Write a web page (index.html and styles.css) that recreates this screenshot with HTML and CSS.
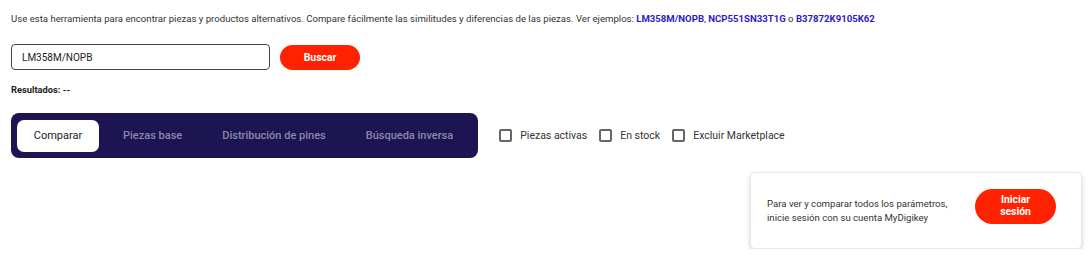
FILE: index.html
```html
<!DOCTYPE html>
<html lang="es">
<head>
<meta charset="utf-8">
<link rel="stylesheet" href="styles.css">
</head>
<body>
<div class="page">
  <p class="intro">Use esta herramienta para encontrar piezas y productos alternativos. Compare fácilmente las similitudes y diferencias de las piezas. Ver ejemplos: <a href="#">LM358M/NOPB</a>, <a href="#">NCP551SN33T1G</a> o <a href="#">B37872K9105K62</a></p>
  <div class="search">
    <input class="search-input" type="text" value="LM358M/NOPB">
    <button class="btn btn-search">Buscar</button>
  </div>
  <div class="results">Resultados: --</div>
  <div class="toolbar">
    <div class="tabs">
      <div class="tab active">Comparar</div>
      <div class="tab">Piezas base</div>
      <div class="tab">Distribución de pines</div>
      <div class="tab">Búsqueda inversa</div>
    </div>
    <div class="filters">
      <label class="check"><span class="box"></span>Piezas activas</label>
      <label class="check"><span class="box"></span>En stock</label>
      <label class="check"><span class="box"></span>Excluir Marketplace</label>
    </div>
  </div>
  <div class="card-row">
    <div class="card">
      <p class="card-text">Para ver y comparar todos los parámetros,<br>inicie sesión con su cuenta MyDigikey</p>
      <button class="btn btn-login">Iniciar<br>sesión</button>
    </div>
  </div>
</div>
</body>
</html>
```
FILE: styles.css
```css
* { box-sizing: border-box; }
html, body { margin: 0; padding: 0; background: #fff; }
body { font-family: Roboto, "Noto Sans", Arial, sans-serif; color: #222; }
.page { padding: 0 9px 0 11px; }
.intro { margin: 0; padding-top: 12px; font-size: 9.6px; line-height: 14px; color: #333; white-space: nowrap; }
.intro a { color: #2e1bc6; font-weight: 700; text-decoration: none; }
.search { display: flex; align-items: center; gap: 10px; margin-top: 18px; }
.search-input {
  width: 259px; height: 26px; border: 1px solid #444; border-radius: 4px;
  padding: 0 10px; font-family: inherit; font-size: 10px; color: #222; outline: none;
}
.btn { border: 0; background: #ff2200; color: #fff; font-family: inherit; font-weight: 700; cursor: pointer; }
.btn-search { width: 80px; height: 25px; border-radius: 13px; font-size: 10.4px; }
.results { margin-top: 13px; font-size: 9.3px; font-weight: 700; color: #222; line-height: 14px; }
.toolbar { display: flex; align-items: center; gap: 21px; margin-top: 16px; }
.tabs {
  display: flex; align-items: center; flex-shrink: 0; height: 45px;
  background: #1c1551; border-radius: 8px; padding: 0 5px 0 6px;
}
.tab { flex-shrink: 0; font-size: 11px; color: #8c88aa; font-weight: 500; padding: 0 20px; line-height: 32px; white-space: nowrap; }
.tab.active { background: #fff; color: #222; font-weight: 400; border-radius: 7px; width: 82px; padding: 0; text-align: center; margin-right: 4px; }
.filters { display: flex; align-items: center; gap: 12px; }
.check { display: flex; align-items: center; gap: 8px; font-size: 10.5px; color: #333; white-space: nowrap; }
.box { width: 13px; height: 13px; border: 2px solid #666; border-radius: 2px; display: inline-block; flex-shrink: 0; }
.card-row { display: flex; justify-content: flex-end; margin-top: 14px; }
.card {
  width: 332px; height: 77px; border-radius: 5px; background: #fff;
  border: 1px solid #e8e8e8;
  box-shadow: 0 2px 4px rgba(0,0,0,0.18); display: flex; align-items: center;
  justify-content: space-between; padding: 0 25px 0 16px;
}
.card-text { margin: 0; font-size: 9.6px; line-height: 14px; color: #333; }
.btn-login { width: 81px; height: 35px; border-radius: 18px; font-size: 10.4px; line-height: 12px; margin-top: -9px; }
```
